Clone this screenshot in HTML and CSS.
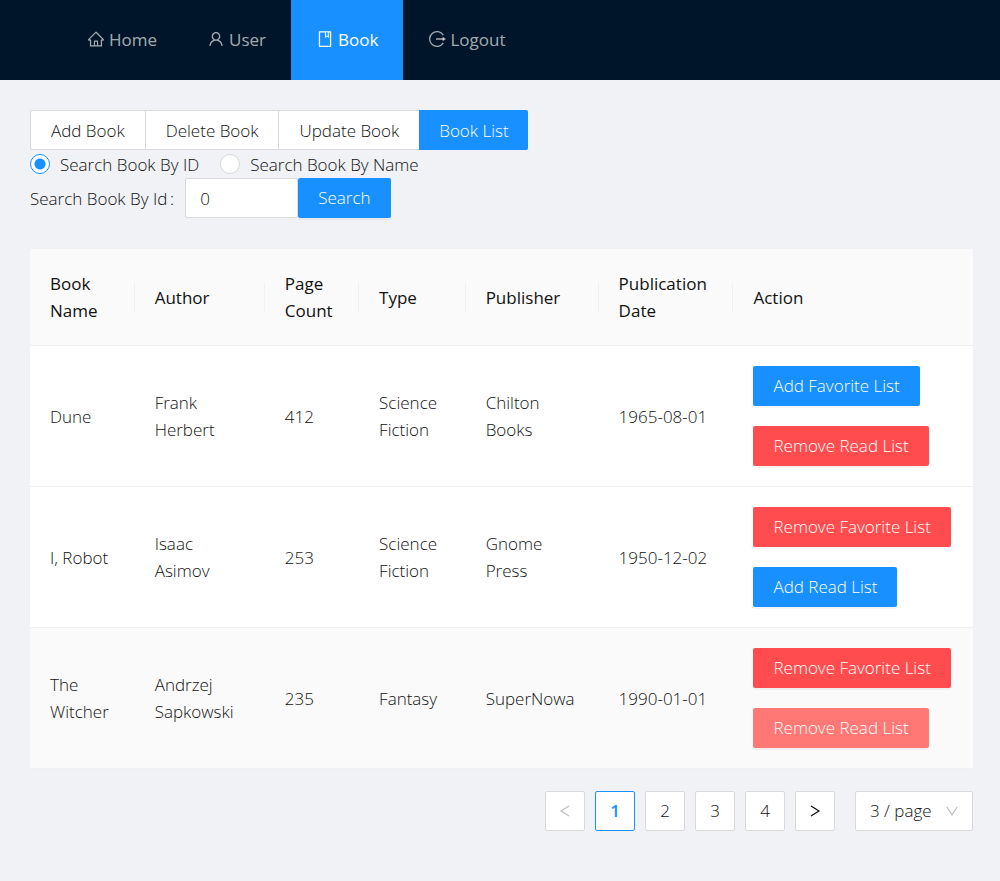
FILE: index.html
```html
<!DOCTYPE html>
<html lang="en">
<head>
<meta charset="utf-8">
<meta name="viewport" content="width=device-width, initial-scale=1">
<title>Book List</title>
<link rel="stylesheet" href="styles.css">
</head>
<body>
<header class="header">
  <nav class="menu">
    <a class="menu-item" href="#home"><svg class="icon" viewBox="0 0 1024 1024" aria-hidden="true"><path d="M946.5 505L560.1 118.8l-25.9-25.9a31.500 31.500 0 0 0-44.400 0L77.500 505a63.900 63.900 0 0 0-18.800 46c.4 35.200 29.700 63.300 64.900 63.300h42.500V940h691.800V614.300h43.400c17.100 0 33.200-6.700 45.300-18.800a63.600 63.600 0 0 0 18.700-45.300c0-17-6.700-33.100-18.800-45.200zM568 868H456V664h112v204zm217.900-325.700V868H632V640c0-22.100-17.900-40-40-40H432c-22.100 0-40 17.900-40 40v228H238.100V542.300h-96l370-369.700 23.100 23.100L882 542.300h-96.100z"/></svg>Home</a>
    <a class="menu-item" href="#user"><svg class="icon" viewBox="0 0 1024 1024" aria-hidden="true"><path d="M858.500 763.600a374 374 0 0 0-80.600-119.500 375.630 375.630 0 0 0-119.500-80.600c-.4-.2-.8-.3-1.200-.5C719.500 518 760 444.700 760 362c0-137-111-248-248-248S264 225 264 362c0 82.700 40.500 156 102.800 201.100-.4.2-.8.300-1.200.5-44.800 18.900-85 46-119.500 80.600a375.630 375.630 0 0 0-80.600 119.500A371.700 371.700 0 0 0 136 901.800a8 8 0 0 0 8 8.200h60c4.400 0 7.900-3.500 8-7.800 2-77.200 33-149.500 87.800-204.300 56.700-56.700 132-87.900 212.200-87.900s155.500 31.200 212.200 87.900C779 752.700 810 825 812 902.200c.1 4.400 3.600 7.800 8 7.800h60a8 8 0 0 0 8-8.200c-1-47.800-10.900-94.300-29.500-138.200zM512 534c-45.900 0-89.100-17.900-121.600-50.400S340 407.900 340 362c0-45.900 17.900-89.100 50.400-121.600S466.100 190 512 190s89.100 17.900 121.600 50.400S684 316.100 684 362c0 45.900-17.900 89.100-50.400 121.600S557.900 534 512 534z"/></svg>User</a>
    <a class="menu-item active" href="#book" aria-current="page"><svg class="icon" viewBox="0 0 1024 1024" aria-hidden="true"><path d="M832 64H192c-17.700 0-32 14.300-32 32v832c0 17.700 14.300 32 32 32h640c17.700 0 32-14.300 32-32V96c0-17.700-14.300-32-32-32zM668 345.900L621.500 312 572 347.400V124h96v221.900zm124 546.100H232V136h280v296.900c0 3.300 1 6.600 3 9.300a15.900 15.900 0 0 0 22.300 3.700l83.800-59.900 81.400 59.400c2.700 2 6 3.100 9.400 3.100 8.800 0 16-7.200 16-16V136h64v756z"/></svg>Book</a>
    <a class="menu-item" href="#logout"><svg class="icon line" viewBox="0 0 18 18" aria-hidden="true"><path d="M15.300 5.100A7.400 7.400 0 1 0 15.300 12.900M8 9h8"/><path class="fill" d="M14.600 6.700 18 9l-3.400 2.300z"/></svg>Logout</a>
  </nav>
</header>
<main class="content">
  <div class="tabs">
    <button type="button" class="tab">Add Book</button>
    <button type="button" class="tab">Delete Book</button>
    <button type="button" class="tab">Update Book</button>
    <button type="button" class="tab selected">Book List</button>
  </div>
  <div class="radios">
    <label class="radio"><input type="radio" name="mode" checked>Search Book By ID</label>
    <label class="radio"><input type="radio" name="mode">Search Book By Name</label>
  </div>
  <form class="search">
    <label for="book-id">Search Book By Id&thinsp;:</label>
    <input class="search-input" id="book-id" type="text" value="0">
    <button type="button" class="btn primary">Search</button>
  </form>
  <table class="books">
    <colgroup><col class="c-name"><col class="c-author"><col class="c-count"><col class="c-type"><col class="c-publisher"><col class="c-date"><col></colgroup>
    <thead>
      <tr><th>Book Name</th><th>Author</th><th>Page Count</th><th>Type</th><th>Publisher</th><th>Publication Date</th><th>Action</th></tr>
    </thead>
    <tbody>
      <tr><td>Dune</td><td>Frank Herbert</td><td>412</td><td>Science Fiction</td><td>Chilton Books</td><td>1965-08-01</td>
        <td><div class="actions"><button type="button" class="btn primary">Add Favorite List</button><button type="button" class="btn danger">Remove Read List</button></div></td></tr>
      <tr><td>I, Robot</td><td>Isaac Asimov</td><td>253</td><td>Science Fiction</td><td>Gnome Press</td><td>1950-12-02</td>
        <td><div class="actions"><button type="button" class="btn danger">Remove Favorite List</button><button type="button" class="btn primary">Add Read List</button></div></td></tr>
      <tr class="hovered"><td>The Witcher</td><td>Andrzej Sapkowski</td><td>235</td><td>Fantasy</td><td>SuperNowa</td><td>1990-01-01</td>
        <td><div class="actions"><button type="button" class="btn danger">Remove Favorite List</button><button type="button" class="btn danger light">Remove Read List</button></div></td></tr>
    </tbody>
  </table>
  <nav class="pagination" aria-label="Pages">
    <button type="button" class="page" disabled aria-label="Previous page"><svg class="arrow" viewBox="0 0 12 12" aria-hidden="true"><path d="M10 1 2 6l8 5"/></svg></button>
    <button type="button" class="page current">1</button>
    <button type="button" class="page">2</button>
    <button type="button" class="page">3</button>
    <button type="button" class="page">4</button>
    <button type="button" class="page" aria-label="Next page"><svg class="arrow" viewBox="0 0 12 12" aria-hidden="true"><path d="m2 1 8 5-8 5"/></svg></button>
    <div class="size">
      <select aria-label="Rows per page"><option>3 / page</option><option>10 / page</option></select>
      <svg class="chevron" viewBox="0 0 12 12" aria-hidden="true"><path d="m1 2 5 8 5-8"/></svg>
    </div>
  </nav>
</main>
</body>
</html>
```
FILE: styles.css
```css
* { box-sizing: border-box; }

body {
  margin: 0;
  min-height: 100vh;
  background: #f0f2f5;
  color: #111;
  font-family: "Open Sans", "Noto Sans", sans-serif;
  font-size: 17px;
  font-weight: 300;
  line-height: 27px;
}

button, input, select { font: inherit; color: inherit; }

.header { background: #001529; padding: 0 62px; }
.menu { display: flex; }
.menu-item {
  display: flex;
  align-items: center;
  gap: 4px;
  height: 80px;
  padding: 0 25px 2px;
  color: rgba(255, 255, 255, 0.65);
  text-decoration: none;
  font-weight: 400;
}
.menu-item.active { background: #1890ff; color: #fff; }
.icon { width: 18px; height: 18px; fill: currentColor; }
.icon.line { fill: none; stroke: currentColor; stroke-width: 1.3; }
.icon .fill { fill: currentColor; stroke: none; }

.content { padding: 30px 27px 30px 30px; }

.tabs { display: flex; }
.tab {
  height: 40px;
  padding: 0 20px;
  border: 1px solid #d9d9d9;
  border-right-width: 0;
  background: #fff;
}
.tab:first-child { border-radius: 2px 0 0 2px; }
.tab.selected {
  padding: 0 19px;
  border-color: #1890ff;
  border-radius: 0 2px 2px 0;
  background: #1890ff;
  color: #fff;
}

.radios { display: flex; gap: 21px; height: 28px; align-items: center; }
.radio { display: flex; align-items: center; gap: 10px; }
.radio input {
  appearance: none;
  width: 20px;
  height: 20px;
  margin: 0;
  border: 1px solid #d9d9d9;
  border-radius: 50%;
  background: #fff;
}
.radio input:checked {
  border-color: #1890ff;
  background: radial-gradient(circle, #1890ff 5px, #fff 6px);
}

.search { display: flex; align-items: center; margin-bottom: 31px; }
.search label { margin-right: 11px; }
.search-input {
  width: 113px;
  height: 40px;
  padding: 0 14px;
  border: 1px solid #d9d9d9;
  border-radius: 2px;
  background: #fff;
}

.btn {
  height: 40px;
  padding: 0 20px 1px;
  border: 0;
  border-radius: 2px;
  color: #fff;
  box-shadow: 0 2px 0 rgba(0, 0, 0, 0.04);
  white-space: nowrap;
}
.primary { background: #1890ff; }
.danger { background: #ff4d4f; }
.danger.light { background: #ff7875; }

.books {
  width: 100%;
  table-layout: fixed;
  border-collapse: separate;
  border-spacing: 0;
  border-radius: 2px 2px 0 0;
  background: #fff;
}
.c-name { width: 11.1%; }
.c-author { width: 13.8%; }
.c-count { width: 10%; }
.c-type { width: 11.3%; }
.c-publisher { width: 14.1%; }
.c-date { width: 14.3%; }
.books th, .books td {
  padding: 20px;
  border-bottom: 1px solid #f0f0f0;
  text-align: left;
  vertical-align: middle;
}
.books th {
  height: 97px;
  background: linear-gradient(#f0f0f0, #f0f0f0) right center / 1px 28px no-repeat #fafafa;
  font-weight: 500;
}
.books th:last-child { background: #fafafa; }
.hovered td { background: #fafafa; }
.actions { display: flex; flex-direction: column; align-items: flex-start; gap: 20px; }

.pagination { display: flex; justify-content: flex-end; gap: 10px; margin-top: 22px; }
.page {
  display: flex;
  align-items: center;
  justify-content: center;
  width: 40px;
  height: 40px;
  padding: 0 0 1px;
  border: 1px solid #d9d9d9;
  border-radius: 2px;
  background: #fff;
}
.page:disabled { color: rgba(0, 0, 0, 0.25); }
.page.current { border-color: #1890ff; color: #1890ff; font-weight: 600; }
.arrow { width: 12px; height: 12px; fill: none; stroke: currentColor; stroke-width: 1.3; }
.size { position: relative; width: 118px; margin-left: 10px; }
.size select {
  appearance: none;
  width: 100%;
  height: 40px;
  padding: 0 14px 1px;
  border: 1px solid #d9d9d9;
  border-radius: 2px;
  background: #fff;
}
.chevron {
  position: absolute;
  top: 14px;
  right: 15px;
  width: 12px;
  height: 12px;
  fill: none;
  stroke: #bfbfbf;
  stroke-width: 1.2;
  pointer-events: none;
}
```
